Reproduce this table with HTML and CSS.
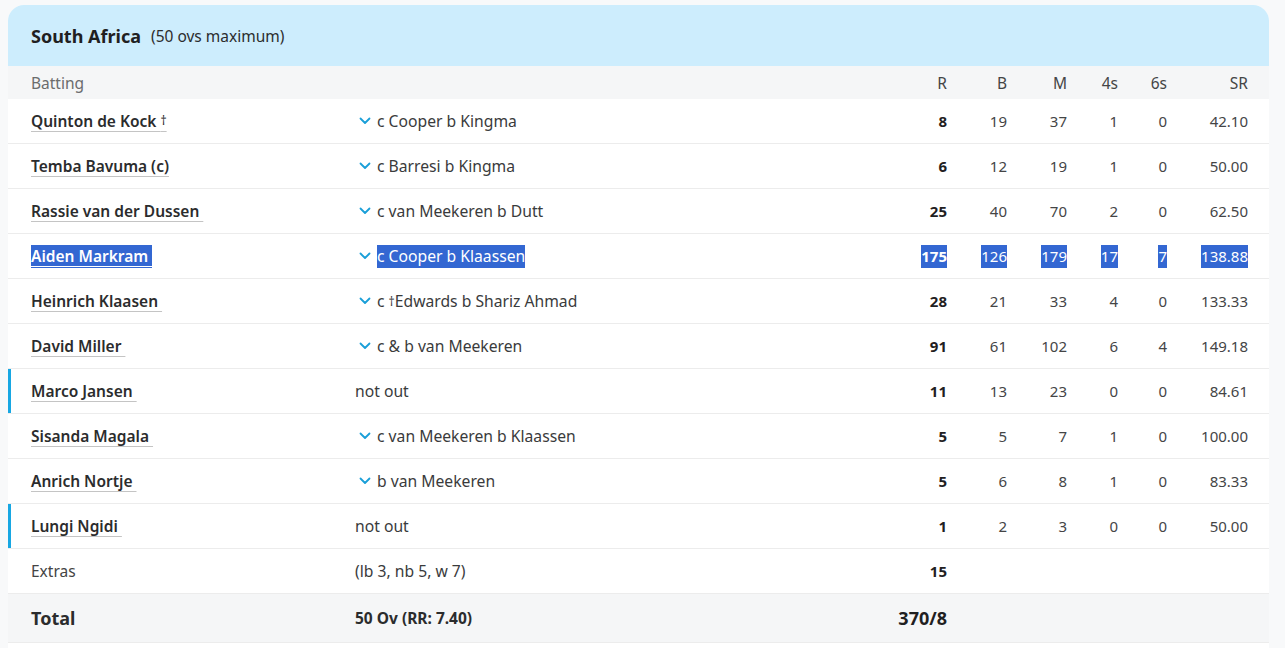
FILE: index.html
```html
<!DOCTYPE html>
<html lang="en">
<head>
<meta charset="utf-8">
<title>South Africa Batting</title>
<link rel="stylesheet" href="styles.css">
</head>
<body>
<div class="card">
  <div class="card-head">
    <span class="team">South Africa</span>
    <span class="overs">(50 ovs maximum)</span>
  </div>
  <div class="row thead">
    <div class="c-name">Batting</div>
    <div class="c-dis"></div>
    <div class="num">R</div>
    <div class="num">B</div>
    <div class="num">M</div>
    <div class="num">4s</div>
    <div class="num">6s</div>
    <div class="num">SR</div>
  </div>

  <div class="row">
    <div class="c-name"><span class="pl">Quinton de Kock <span class="dag">†</span></span></div>
    <div class="c-dis"><span class="chev"><svg viewBox="0 0 12 8" width="12" height="8"><path d="M1.5 1.5 L6 6 L10.5 1.5" fill="none" stroke="currentColor" stroke-width="1.8" stroke-linecap="round" stroke-linejoin="round"/></svg></span>c Cooper b Kingma</div>
    <div class="num runs">8</div><div class="num">19</div><div class="num">37</div><div class="num">1</div><div class="num">0</div><div class="num">42.10</div>
  </div>
  <div class="row">
    <div class="c-name"><span class="pl">Temba Bavuma (c)</span></div>
    <div class="c-dis"><span class="chev"><svg viewBox="0 0 12 8" width="12" height="8"><path d="M1.5 1.5 L6 6 L10.5 1.5" fill="none" stroke="currentColor" stroke-width="1.8" stroke-linecap="round" stroke-linejoin="round"/></svg></span>c Barresi b Kingma</div>
    <div class="num runs">6</div><div class="num">12</div><div class="num">19</div><div class="num">1</div><div class="num">0</div><div class="num">50.00</div>
  </div>
  <div class="row">
    <div class="c-name"><span class="pl">Rassie van der Dussen&nbsp;</span></div>
    <div class="c-dis"><span class="chev"><svg viewBox="0 0 12 8" width="12" height="8"><path d="M1.5 1.5 L6 6 L10.5 1.5" fill="none" stroke="currentColor" stroke-width="1.8" stroke-linecap="round" stroke-linejoin="round"/></svg></span>c van Meekeren b Dutt</div>
    <div class="num runs">25</div><div class="num">40</div><div class="num">70</div><div class="num">2</div><div class="num">0</div><div class="num">62.50</div>
  </div>
  <div class="row">
    <div class="c-name"><span class="pl sel">Aiden Markram&nbsp;</span></div>
    <div class="c-dis"><span class="chev"><svg viewBox="0 0 12 8" width="12" height="8"><path d="M1.5 1.5 L6 6 L10.5 1.5" fill="none" stroke="currentColor" stroke-width="1.8" stroke-linecap="round" stroke-linejoin="round"/></svg></span><span class="sel">c Cooper b Klaassen</span></div>
    <div class="num runs"><span class="sel">175</span></div><div class="num"><span class="sel">126</span></div><div class="num"><span class="sel">179</span></div><div class="num"><span class="sel">17</span></div><div class="num"><span class="sel">7</span></div><div class="num"><span class="sel">138.88</span></div>
  </div>
  <div class="row">
    <div class="c-name"><span class="pl">Heinrich Klaasen&nbsp;</span></div>
    <div class="c-dis"><span class="chev"><svg viewBox="0 0 12 8" width="12" height="8"><path d="M1.5 1.5 L6 6 L10.5 1.5" fill="none" stroke="currentColor" stroke-width="1.8" stroke-linecap="round" stroke-linejoin="round"/></svg></span>c <span class="dag">†</span>Edwards b Shariz Ahmad</div>
    <div class="num runs">28</div><div class="num">21</div><div class="num">33</div><div class="num">4</div><div class="num">0</div><div class="num">133.33</div>
  </div>
  <div class="row">
    <div class="c-name"><span class="pl">David Miller&nbsp;</span></div>
    <div class="c-dis"><span class="chev"><svg viewBox="0 0 12 8" width="12" height="8"><path d="M1.5 1.5 L6 6 L10.5 1.5" fill="none" stroke="currentColor" stroke-width="1.8" stroke-linecap="round" stroke-linejoin="round"/></svg></span>c &amp; b van Meekeren</div>
    <div class="num runs">91</div><div class="num">61</div><div class="num">102</div><div class="num">6</div><div class="num">4</div><div class="num">149.18</div>
  </div>
  <div class="row notout">
    <div class="c-name"><span class="pl">Marco Jansen&nbsp;</span></div>
    <div class="c-dis plain">not out</div>
    <div class="num runs">11</div><div class="num">13</div><div class="num">23</div><div class="num">0</div><div class="num">0</div><div class="num">84.61</div>
  </div>
  <div class="row">
    <div class="c-name"><span class="pl">Sisanda Magala&nbsp;</span></div>
    <div class="c-dis"><span class="chev"><svg viewBox="0 0 12 8" width="12" height="8"><path d="M1.5 1.5 L6 6 L10.5 1.5" fill="none" stroke="currentColor" stroke-width="1.8" stroke-linecap="round" stroke-linejoin="round"/></svg></span>c van Meekeren b Klaassen</div>
    <div class="num runs">5</div><div class="num">5</div><div class="num">7</div><div class="num">1</div><div class="num">0</div><div class="num">100.00</div>
  </div>
  <div class="row">
    <div class="c-name"><span class="pl">Anrich Nortje&nbsp;</span></div>
    <div class="c-dis"><span class="chev"><svg viewBox="0 0 12 8" width="12" height="8"><path d="M1.5 1.5 L6 6 L10.5 1.5" fill="none" stroke="currentColor" stroke-width="1.8" stroke-linecap="round" stroke-linejoin="round"/></svg></span>b van Meekeren</div>
    <div class="num runs">5</div><div class="num">6</div><div class="num">8</div><div class="num">1</div><div class="num">0</div><div class="num">83.33</div>
  </div>
  <div class="row notout">
    <div class="c-name"><span class="pl">Lungi Ngidi&nbsp;</span></div>
    <div class="c-dis plain">not out</div>
    <div class="num runs">1</div><div class="num">2</div><div class="num">3</div><div class="num">0</div><div class="num">0</div><div class="num">50.00</div>
  </div>
  <div class="row extras">
    <div class="c-name">Extras</div>
    <div class="c-dis plain">(lb 3, nb 5, w 7)</div>
    <div class="num runs">15</div><div></div><div></div><div></div><div></div><div></div>
  </div>
  <div class="row total">
    <div class="c-name">Total</div>
    <div class="c-dis plain">50 Ov (RR: 7.40)</div>
    <div class="num runs">370/8</div><div></div><div></div><div></div><div></div><div></div>
  </div>
  <div class="row tail"></div>
</div>
</body>
</html>
```

FILE: styles.css
```css
html, body {
  margin: 0;
  padding: 0;
  background: #f8f9fa;
}
body {
  padding: 5px 16px 0 8px;
  font-family: "Noto Sans", "Open Sans", sans-serif;
  color: #2b2c2d;
}
.card {
  background: #ffffff;
  border-radius: 16px 16px 0 0;
  overflow: hidden;
}
.card-head {
  background: #cdedfd;
  height: 61px;
  padding-left: 23px;
  display: flex;
  align-items: center;
  gap: 10px;
}
.team {
  font-size: 18px;
  font-weight: 700;
  color: #1f2021;
}
.overs {
  font-size: 15.5px;
  color: #2b2c2d;
}
.row {
  display: grid;
  grid-template-columns: 324px 1fr 60px 60px 60px 51px 49px 81px;
  align-items: center;
  padding: 0 21px 0 23px;
  height: 44px;
  border-bottom: 1px solid #ececec;
  font-size: 15px;
  color: #3a3b3c;
}
.thead {
  height: 33px;
  border-bottom: none;
  background: #f5f6f7;
  color: #6b6c6d;
  font-size: 15.5px;
}
.c-name {
  font-weight: 600;
  color: #2b2c2d;
  font-size: 15.5px;
}
.thead .c-name, .extras .c-name {
  font-weight: 400;
  color: #6b6c6d;
  font-size: 15.5px;
}
.extras .c-name { color: #444; }
.pl {
  text-decoration: underline;
  text-decoration-color: #c4c4c4;
  text-underline-offset: 4px;
  text-decoration-thickness: 1px;
}
.dag {
  font-size: 12px;
  font-weight: 400;
  vertical-align: 2px;
}
.c-dis {
  display: flex;
  align-items: center;
  white-space: pre;
  color: #3a3b3c;
  font-size: 15.7px;
}
.chev {
  display: inline-flex;
  width: 22px;
  padding-left: 4px;
  box-sizing: border-box;
  color: #1a9fd8;
}
.num {
  text-align: right;
  color: #444546;
}
.runs {
  font-weight: 700;
  color: #1f2021;
}
.sel {
  background: #3367d2;
  color: #ffffff;
  line-height: 23px;
  display: inline-block;
  text-decoration-color: #ffffff;
}
.notout {
  box-shadow: inset 3px 0 0 #17a7e3;
}
.total {
  height: 48px;
  background: #f5f6f7;
}
.total .c-name {
  font-size: 18px;
  font-weight: 700;
}
.total .c-dis {
  font-weight: 700;
  font-size: 15.5px;
  color: #2b2c2d;
}
.total .runs {
  font-size: 18px;
}
.tail {
  height: 20px;
  border-bottom: none;
}
```
